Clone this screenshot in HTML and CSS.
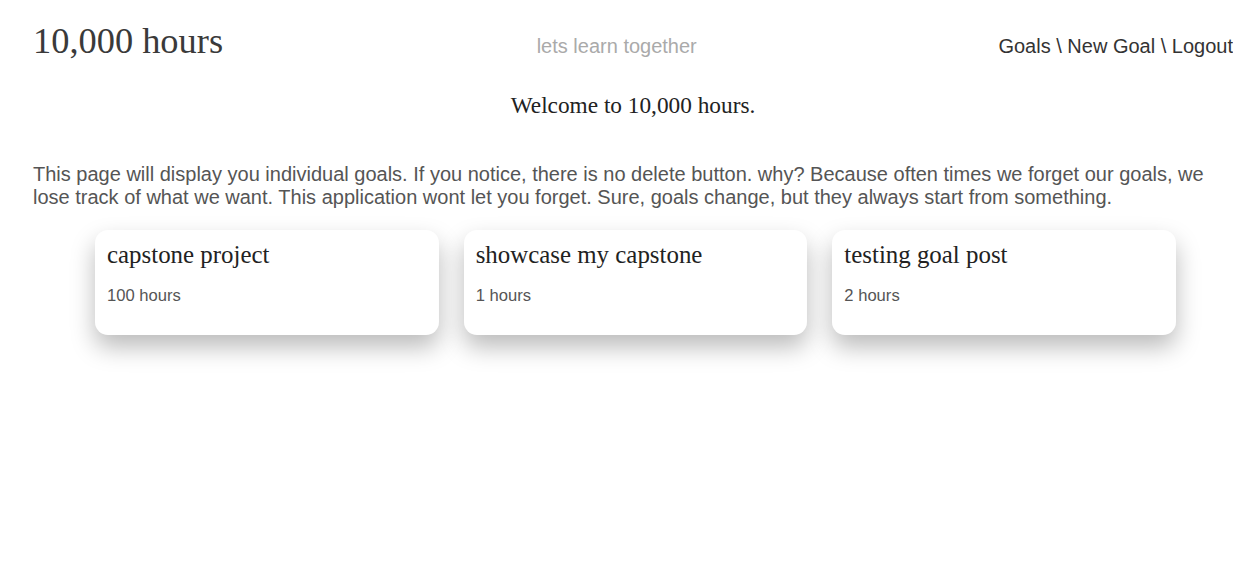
FILE: index.html
```html
<!DOCTYPE html>
<html lang="en">
<head>
<meta charset="utf-8">
<title>10,000 hours</title>
<link rel="stylesheet" href="styles.css">
</head>
<body>
<div class="page">
  <header class="header">
    <h1 class="brand">10,000 hours</h1>
    <p class="tagline">lets learn together</p>
    <nav class="nav"><a href="#">Goals</a> \ <a href="#">New Goal</a> \ <a href="#">Logout</a></nav>
  </header>
  <main>
    <h2 class="welcome">Welcome to 10,000 hours.</h2>
    <p class="intro">This page will display you individual goals. If you notice, there is no delete button. why? Because often times we forget our goals, we lose track of what we want. This application wont let you forget. Sure, goals change, but they always start from something.</p>
    <section class="cards">
      <article class="card">
        <h3 class="card-title">capstone project</h3>
        <p class="card-hours">100 hours</p>
      </article>
      <article class="card">
        <h3 class="card-title">showcase my capstone</h3>
        <p class="card-hours">1 hours</p>
      </article>
      <article class="card">
        <h3 class="card-title">testing goal post</h3>
        <p class="card-hours">2 hours</p>
      </article>
    </section>
  </main>
</div>
</body>
</html>
```

FILE: styles.css
```css
html, body {
  margin: 0;
  padding: 0;
  background: #fff;
}
.page {
  padding: 0 0 80px 33px;
  min-height: 100vh;
  box-sizing: border-box;
  font-family: "Liberation Sans", Arial, sans-serif;
  color: #444;
}
.header {
  display: flex;
  justify-content: space-between;
  align-items: baseline;
  padding-top: 21px;
}
.brand {
  margin: 0;
  font-family: "Liberation Serif", "Times New Roman", serif;
  font-weight: normal;
  font-size: 36.4px;
  line-height: 41px;
  color: #3a3a3a;
}
.tagline {
  margin: 0 0 0 12px;
  font-size: 20px;
  color: #aaa;
}
.nav {
  font-size: 20px;
  color: #333;
}
.nav a {
  color: #333;
  text-decoration: none;
}
.welcome {
  margin: 30px 0 0;
  text-align: center;
  font-family: "Liberation Serif", "Times New Roman", serif;
  font-weight: normal;
  font-size: 23.3px;
  line-height: 27px;
  color: #222;
}
.intro {
  margin: 44px 0 0;
  font-size: 20px;
  line-height: 23px;
  color: #555;
}
.cards {
  display: grid;
  grid-template-columns: repeat(3, 1fr);
  gap: 25px;
  padding: 0 57px 0 62px;
  margin-top: 21px;
}
.card {
  background: #fff;
  border-radius: 13px;
  height: 105px;
  padding: 0 12px;
  box-sizing: border-box;
  box-shadow: 0 12px 24px rgba(0, 0, 0, 0.27);
}
.card-title {
  margin: 0;
  padding-top: 10px;
  font-family: "Liberation Serif", "Times New Roman", serif;
  font-weight: normal;
  font-size: 24.9px;
  line-height: 29px;
  color: #222;
}
.card-hours {
  margin: 17px 0 0;
  font-size: 16.6px;
  line-height: 19px;
  color: #555;
}
```
